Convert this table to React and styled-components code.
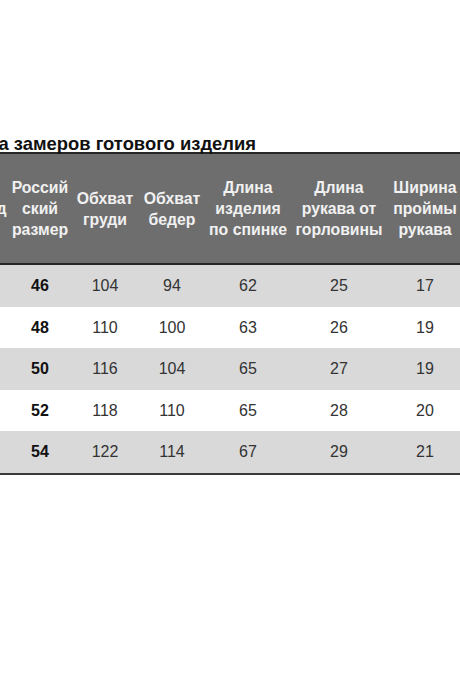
import React from "react";
import styled, { createGlobalStyle } from "styled-components";

const columns = [
  { width: 32, lines: ["Код"] },
  { width: 64, lines: ["Россий", "ский", "размер"] },
  { width: 66, lines: ["Обхват", "груди"] },
  { width: 68, lines: ["Обхват", "бедер"] },
  { width: 84, lines: ["Длина", "изделия", "по спинке"] },
  { width: 98, lines: ["Длина", "рукава от", "горловины"] },
  { width: 74, lines: ["Ширина", "проймы", "рукава"] },
];

const rows = [
  ["", "46", "104", "94", "62", "25", "17"],
  ["", "48", "110", "100", "63", "26", "19"],
  ["", "50", "116", "104", "65", "27", "19"],
  ["", "52", "118", "110", "65", "28", "20"],
  ["", "54", "122", "114", "67", "29", "21"],
];

export default function App() {
  return (
    <>
      <GlobalStyle />
      <Page>
        <TitleRow>
          <Title>Таблица замеров готового изделия</Title>
        </TitleRow>
        <Table>
          <colgroup>
            {columns.map((col, i) => (
              <col key={i} style={{ width: col.width }} />
            ))}
          </colgroup>
          <thead>
            <tr>
              {columns.map((col, i) => (
                <HeadCell key={i}>
                  {col.lines.map((line, j) => (
                    <HeadLine key={j}>{line}</HeadLine>
                  ))}
                </HeadCell>
              ))}
            </tr>
          </thead>
          <tbody>
            {rows.map((row, i) => (
              <Row key={i} $shaded={i % 2 === 0} $last={i === rows.length - 1}>
                {row.map((value, j) => (
                  <Cell key={j} $bold={j === 1} $tall={i % 2 === 0}>
                    {value}
                  </Cell>
                ))}
              </Row>
            ))}
          </tbody>
        </Table>
      </Page>
    </>
  );
}

const GlobalStyle = createGlobalStyle`
  html, body {
    margin: 0;
    padding: 0;
    background: #ffffff;
  }
  body {
    font-family: "Liberation Sans", Arial, sans-serif;
  }
`;

const Page = styled.div`
  width: 460px;
  height: 690px;
  overflow: hidden;
  background: #ffffff;
  padding-top: 135px;
  box-sizing: border-box;
`;

const TitleRow = styled.div`
  display: flex;
  justify-content: flex-end;
  width: 256px;
`;

const Title = styled.div`
  flex-shrink: 0;
  white-space: nowrap;
  font-size: 18.4px;
  line-height: 17px;
  font-weight: bold;
  color: #111;
`;

const Table = styled.table`
  margin-left: -24px;
  width: 486px;
  table-layout: fixed;
  border-collapse: collapse;
  border-spacing: 0;
`;

const HeadCell = styled.th`
  height: 109px;
  padding: 0 1px;
  background: #6e6e6e;
  color: #f1f1f1;
  font-size: 15.8px;
  font-weight: bold;
  line-height: 21px;
  text-align: center;
  vertical-align: middle;
  border-top: 2px solid #262626;
  border-bottom: 2px solid #262626;
  white-space: nowrap;
`;

const HeadLine = styled.div``;

const Row = styled.tr`
  background: ${(p) => (p.$shaded ? "#d9d9d9" : "#ffffff")};
  border-bottom: ${(p) => (p.$last ? "2px solid #3a3a3a" : "none")};
`;

const Cell = styled.td`
  height: ${(p) => (p.$tall ? "42px" : "41px")};
  padding: 0;
  text-align: center;
  vertical-align: middle;
  font-size: 16px;
  font-weight: ${(p) => (p.$bold ? "bold" : "normal")};
  color: ${(p) => (p.$bold ? "#111" : "#333")};
`;
